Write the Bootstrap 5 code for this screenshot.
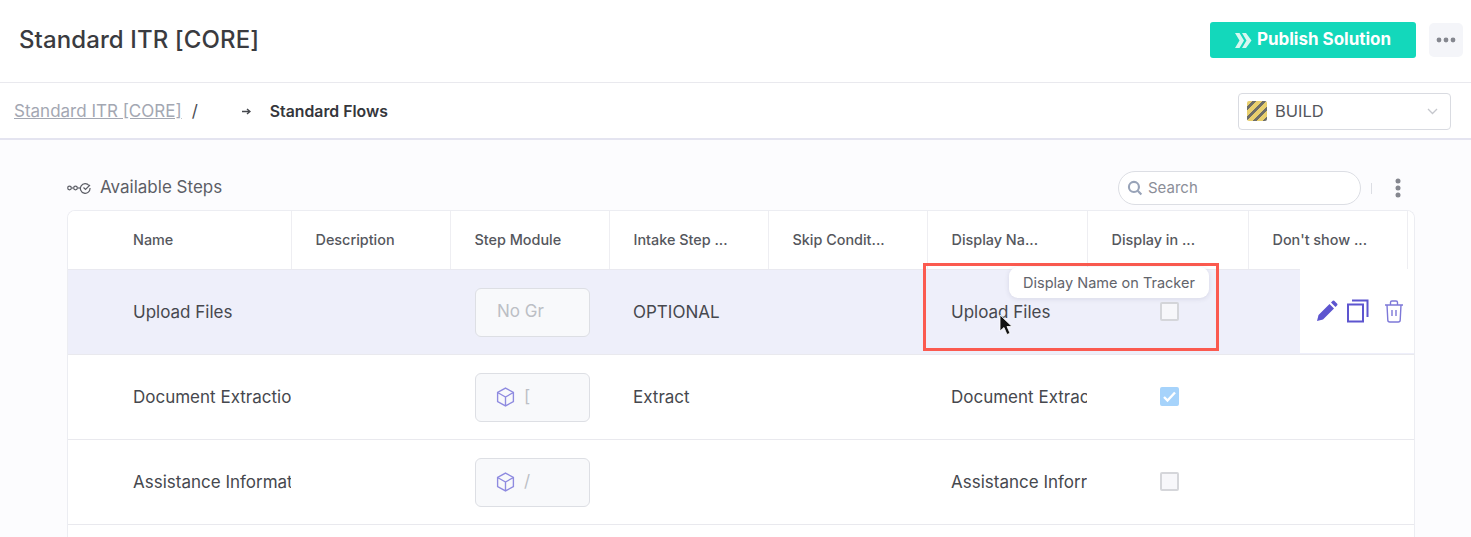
<!DOCTYPE html>
<html lang="en">
<head>
<meta charset="utf-8">
<title>Standard Flows</title>
<link href="https://cdn.jsdelivr.net/npm/bootstrap@5.3.0/dist/css/bootstrap.min.css" rel="stylesheet">
<style>
html,body{height:537px;overflow:hidden;background:#fcfcfe;font-family:Inter,"Liberation Sans",sans-serif;color:#3f4147}
.top-head{height:83px;background:#fff;border-bottom:1px solid #e9e9ee;padding:0 8px 2px 19px}
.page-title{font-size:24px;font-weight:500;color:#3a3b40;margin:0;letter-spacing:.1px}
.btn-publish{width:206px;height:36px;background:#13d8bb;color:#fff;font-weight:700;font-size:17px;border-radius:3px;border:0;padding:0;letter-spacing:0;gap:5px}
.btn-publish:hover{background:#13d8bb;color:#fff}
.btn-more{width:34px;height:34px;background:#f4f5f9;border:0;border-radius:5px;padding:0;margin-left:13px}
.crumb-bar{height:57px;background:#fff;border-bottom:2px solid #e4e4f0;padding:0 20px 0 14px}
.crumb-trail{padding-top:2px}
.crumb-link{color:#a3a7b2;font-size:17px;text-decoration:underline}
.crumb-sep{color:#4a4c52;font-size:17px;margin-left:10px;margin-right:44px}
.crumb-cur{font-size:15.8px;font-weight:600;color:#35363b;margin-left:19px}
.env-select{width:213px;height:37px;margin-top:1px;background:#fff;border:1px solid #d9dbe1;border-radius:4px;padding:0 12px 0 8px;font-size:16.5px;color:#55575d;gap:8px}
.env-swatch{width:20px;height:20px;border-radius:2px;background:repeating-linear-gradient(135deg,#e8cf6e 0 4px,#6e6e68 4px 7px)}
.main-area{padding:0 56px 0 67px}
.steps-head{height:70px;padding-top:26px}
.steps-title{font-size:17px;color:#5c5e66;margin-left:8px}
.search-box{width:243px;height:34px;border:1px solid #dcdee4;border-radius:17px;background:#fff;padding:0 8px;font-size:15px;color:#8b8e98;gap:5px}
.vsep{width:1px;height:11px;background:#dcdee4;margin:0 23px 0 10px}
.dots-more{margin-right:14px}
.grid-wrap{position:relative;height:327px;background:#fff;border:1px solid #ecedf2;border-bottom:0;border-radius:8px 8px 0 0;overflow:hidden}
.steps-table{table-layout:fixed;width:1346px;margin:0;border-collapse:collapse}
.steps-table col{width:159px}
.steps-table col:nth-child(1){width:223px}
.steps-table col:nth-child(6){width:160px}
.steps-table col:nth-child(7){width:161px}
.steps-table col:nth-child(9){width:7px}
.steps-table th{height:58px;font-weight:500;font-size:14.4px;color:#55575d;border-bottom:1px solid #e9e9f0;border-right:1px solid #eeeef2;vertical-align:middle;padding:0 0 0 24px;white-space:nowrap;overflow:hidden;background:#fff}
.steps-table th:first-child{padding-left:65px}
.steps-table th:last-child{border-right:0;padding:0}
.steps-table td{height:85px;font-size:17px;color:#46484e;border-bottom:1px solid #e9e9ee;vertical-align:middle;padding:3px 0 0 24px;white-space:nowrap;overflow:hidden;background:#fff}
.steps-table td:first-child{padding-left:65px}
.steps-table td:last-child{padding:0}
.steps-table tr.hovered td{background:#eeeffa}
.group-chip{width:115px;height:49px;margin:-2px 0 0 1px;background:#f8f9fb;border:1px solid #dddfe4;border-radius:6px;color:#bcbfc5;font-size:17px;padding:0 0 0 20px;gap:9px;overflow:hidden}
.group-chip.empty{padding-left:21px}
.tick{display:block;width:19px;height:19px;margin:-4px 0 0 49px;border:2px solid #d5d6da;border-radius:2px;background:#f7f7fa}
.tick.on{background:#a6d3fb;border-color:#a6d3fb}
.row-actions{position:absolute;left:1232px;top:58px;width:114px;height:84px;background:#fff;padding-left:16px;gap:9px}
.bin-ico{margin-left:6px}
.hint-pop{position:absolute;left:1009px;top:267px;height:31px;width:200px;background:#fff;border-radius:9px;box-shadow:0 1px 5px rgba(60,60,90,.12);font-size:14.5px;color:#62646b;text-align:center;line-height:31px}
.mark-box{position:absolute;left:923px;top:263px;width:296px;height:88px;border:3px solid #fb5a4f}
.ptr{position:absolute;left:998px;top:314px}
</style>
</head>
<body>
<header class="top-head d-flex align-items-center justify-content-between">
  <h1 class="page-title">Standard ITR [CORE]</h1>
  <div class="d-flex align-items-center">
    <button class="btn btn-publish d-flex align-items-center justify-content-center">
      <svg width="17" height="15" viewBox="0 0 17 15"><path d="M0 0h4.500l4.500 7.500L4.500 15H0l4.500-7.500zM7 0h4l5.500 7.500L11 15H7l4.500-7.500z" fill="#d6f8f1"/></svg>Publish Solution
    </button>
    <button class="btn btn-more d-flex align-items-center justify-content-center" aria-label="More">
      <svg width="20" height="6" viewBox="0 0 20 6" fill="#85878f"><circle cx="3" cy="3" r="2.400"/><circle cx="10" cy="3" r="2.400"/><circle cx="17" cy="3" r="2.400"/></svg>
    </button>
  </div>
</header>
<nav class="crumb-bar d-flex align-items-center justify-content-between">
  <div class="crumb-trail d-flex align-items-center">
    <a href="#" class="crumb-link">Standard ITR [CORE]</a>
    <span class="crumb-sep">/</span>
    <svg width="9" height="7" viewBox="0 0 9 7"><path d="M0 3.500h7M5 1l3 2.500L5 6" stroke="#45474d" stroke-width="1.400" fill="none"/></svg>
    <span class="crumb-cur">Standard Flows</span>
  </div>
  <div class="env-select d-flex align-items-center">
    <span class="env-swatch"></span><span>BUILD</span>
    <svg class="ms-auto" width="11" height="7" viewBox="0 0 11 7"><path d="M1 1l4.500 4.500L10 1" stroke="#c5c7cd" stroke-width="1.300" fill="none"/></svg>
  </div>
</nav>
<main class="main-area">
  <div class="steps-head d-flex align-items-center">
    <svg width="25" height="12" viewBox="0 0 25 12" fill="none" stroke="#5c5e66" stroke-width="1.200"><circle cx="2.500" cy="6" r="1.800"/><path d="M4.500 6h2"/><circle cx="8.500" cy="6" r="1.800"/><path d="M10.500 6h3"/><path d="M22 3.500A4.800 4.800 0 1 0 23 6"/><path d="M16.500 5.500l2 2 4.500-4.500"/></svg>
    <span class="steps-title">Available Steps</span>
    <div class="search-box d-flex align-items-center ms-auto">
      <svg width="16" height="16" viewBox="0 0 15 15" fill="none" stroke="#98a3b8" stroke-width="2"><circle cx="6.500" cy="6.500" r="4.700"/><path d="M10 10l3.500 3.500"/></svg>
      <span>Search</span>
    </div>
    <span class="vsep"></span>
    <svg class="dots-more" width="6" height="20" viewBox="0 0 6 20" fill="#85878f"><circle cx="3" cy="3" r="2.500"/><circle cx="3" cy="10" r="2.500"/><circle cx="3" cy="17" r="2.500"/></svg>
  </div>
  <div class="grid-wrap">
    <table class="table steps-table">
      <colgroup><col><col><col><col><col><col><col><col><col></colgroup>
      <thead>
        <tr><th>Name</th><th>Description</th><th>Step Module</th><th>Intake Step ...</th><th>Skip Condit...</th><th>Display Na...</th><th>Display in ...</th><th>Don't show ...</th><th></th></tr>
      </thead>
      <tbody>
        <tr class="hovered">
          <td>Upload Files</td><td></td>
          <td><div class="group-chip empty d-flex align-items-center">No Gr</div></td>
          <td>OPTIONAL</td><td></td><td>Upload Files</td>
          <td><span class="tick"></span></td><td></td><td></td>
        </tr>
        <tr>
          <td>Document Extractio</td><td></td>
          <td><div class="group-chip d-flex align-items-center"><svg width="19" height="20" viewBox="0 0 18 19" fill="none" stroke="#8f8be0" stroke-width="1.300" class="flex-shrink-0"><path d="M9 1l7.500 4.200v8.600L9 18l-7.500-4.200V5.200zM1.500 5.200L9 9.500l7.500-4.300M9 9.500V18"/></svg><span>[</span></div></td>
          <td>Extract</td><td></td><td>Document Extrac</td>
          <td><span class="tick on"><svg width="15" height="15" viewBox="0 0 15 15" class="d-block"><path d="M2 8l3.500 3.500L13 3.500" stroke="#fff" stroke-width="2.400" fill="none"/></svg></span></td><td></td><td></td>
        </tr>
        <tr>
          <td>Assistance Informat</td><td></td>
          <td><div class="group-chip d-flex align-items-center"><svg width="19" height="20" viewBox="0 0 18 19" fill="none" stroke="#8f8be0" stroke-width="1.300" class="flex-shrink-0"><path d="M9 1l7.500 4.200v8.600L9 18l-7.500-4.200V5.200zM1.500 5.200L9 9.500l7.500-4.300M9 9.500V18"/></svg><span>/</span></div></td>
          <td></td><td></td><td>Assistance Inforr</td>
          <td><span class="tick"></span></td><td></td><td></td>
        </tr>
        <tr><td></td><td></td><td></td><td></td><td></td><td></td><td></td><td></td><td></td></tr>
      </tbody>
    </table>
    <div class="row-actions d-flex align-items-center">
      <svg width="22" height="22" viewBox="0 0 22 22" fill="#5d55cf"><path d="M1 21l1.500-6L13.500 4l4.500 4.500L7 19.500zM15 2.500L16.800.8a1 1 0 0 1 1.400 0l3 3a1 1 0 0 1 0 1.400L19.500 7z"/></svg>
      <svg width="22" height="24" viewBox="0 0 22 24" fill="none" stroke="#5d55cf" stroke-width="2"><rect x="1" y="5.500" width="15" height="17"/><path d="M5 1.500h15.500V18"/></svg>
      <svg class="bin-ico" width="20" height="23" viewBox="0 0 20 23" fill="none" stroke="#7d78d8" stroke-width="1.400"><path d="M1 5h18M6.500 4.500V2.500A1.500 1.500 0 0 1 8 1h4a1.500 1.500 0 0 1 1.500 1.500v2M3 5l.8 15a2 2 0 0 0 2 2h8.400a2 2 0 0 0 2-2L17 5M8 10v6M12 10v6"/></svg>
    </div>
  </div>
</main>
<div class="mark-box"></div>
<div class="hint-pop">Display Name on Tracker</div>
<svg class="ptr" width="16" height="23" viewBox="0 0 16 23"><path d="M2 1v16l4-3.500 3 7 3-1.300-3-6.700h5z" fill="#111" stroke="#fff" stroke-width=".8"/></svg>
<script src="https://cdn.jsdelivr.net/npm/bootstrap@5.3.0/dist/js/bootstrap.bundle.min.js"></script>
</body>
</html>
